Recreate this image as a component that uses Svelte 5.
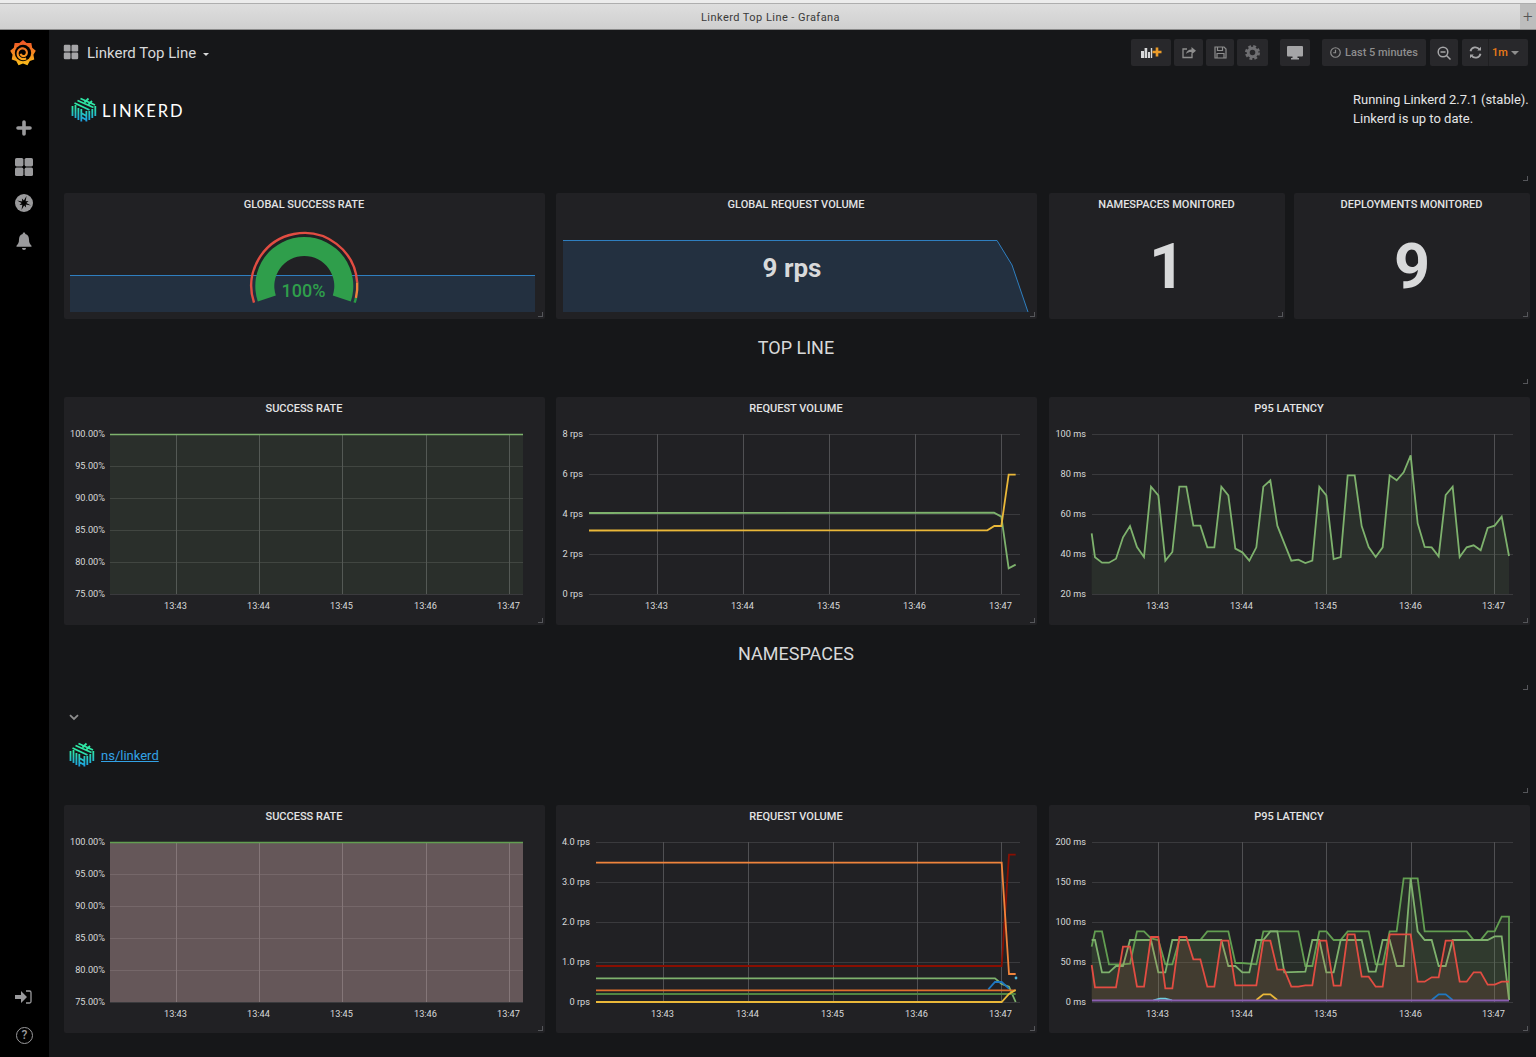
<script>
	const GREEN = '#7eb26d';
	const DARK_GREEN = '#629e51';
	const RED = '#e24d42';
	const TIMES = ['13:43', '13:44', '13:45', '13:46', '13:47'];

	// points were read off 3x crops, so they come with the crop origin
	const crop = (ox, oy, pts) => pts.map(([x, y]) => [ox + x / 3, oy + y / 3]);
	const line = (x0, x1, y, rest = []) => [[x0, y], [x1, y], ...rest];

	const p95Top = crop(1040, 420, [
		[155, 340], [165, 412], [186, 428], [207, 428], [228, 416], [249, 352], [270, 318], [291, 381], [312, 411],
		[333, 200], [355, 226], [376, 422], [397, 396], [418, 200], [439, 200], [460, 317], [481, 317], [502, 382],
		[523, 382], [544, 200], [565, 226], [586, 386], [607, 397], [628, 422], [649, 382], [670, 200], [691, 181],
		[712, 317], [733, 370], [754, 422], [775, 419], [796, 429], [817, 422], [838, 200], [859, 226], [881, 417],
		[902, 411], [923, 166], [944, 166], [965, 318], [986, 381], [1007, 411], [1028, 382], [1049, 166], [1070, 181],
		[1091, 157], [1112, 106], [1133, 310], [1154, 381], [1175, 382], [1196, 409], [1217, 225], [1238, 200],
		[1259, 411], [1280, 382], [1301, 376], [1322, 391], [1343, 324], [1364, 317], [1385, 290], [1407, 408]
	]);

	const p95a = crop(1040, 830, [
		[155, 350], [165, 304], [186, 304], [207, 403], [249, 403], [270, 401], [291, 304], [312, 304], [333, 325],
		[355, 330], [376, 403], [397, 403], [418, 330], [481, 330], [502, 304], [565, 304], [586, 399], [607, 399],
		[649, 403], [670, 304], [775, 304], [796, 408], [817, 408], [838, 304], [859, 304], [881, 330], [902, 330],
		[923, 304], [986, 304], [1007, 403], [1028, 403], [1049, 304], [1070, 304], [1091, 145], [1133, 145],
		[1154, 304], [1280, 304], [1301, 330], [1322, 330], [1343, 304], [1364, 304], [1385, 260], [1407, 260],
		[1407, 510]
	]);
	const p95b = crop(1040, 830, [
		[155, 330], [165, 330], [186, 427], [207, 427], [228, 408], [249, 408], [270, 330], [333, 330], [355, 427],
		[376, 427], [397, 330], [544, 330], [565, 408], [586, 408], [607, 427], [628, 427], [649, 330], [670, 330],
		[691, 304], [712, 304], [733, 427], [796, 425], [817, 330], [838, 330], [859, 427], [881, 427], [902, 330],
		[965, 330], [986, 425], [1007, 425], [1028, 330], [1049, 330], [1070, 408], [1091, 408], [1112, 145],
		[1133, 304], [1154, 330], [1175, 330], [1196, 408], [1217, 408], [1238, 330], [1343, 330], [1364, 319],
		[1385, 319], [1407, 510]
	]);
	const p95c = crop(1040, 830, [
		[155, 405], [165, 472], [228, 472], [249, 350], [270, 350], [291, 470], [312, 470], [333, 321], [355, 321],
		[376, 475], [397, 475], [418, 321], [439, 321], [460, 388], [481, 388], [502, 470], [523, 470], [544, 332],
		[565, 332], [586, 466], [649, 466], [670, 332], [691, 332], [712, 419], [733, 419], [754, 470], [775, 470],
		[796, 466], [817, 466], [838, 332], [859, 332], [881, 467], [902, 467], [923, 313], [944, 313], [965, 440],
		[986, 440], [1007, 470], [1028, 470], [1049, 313], [1112, 313], [1133, 455], [1154, 455], [1175, 442],
		[1196, 442], [1217, 332], [1238, 332], [1259, 455], [1280, 455], [1301, 427], [1322, 427], [1343, 464],
		[1364, 464], [1385, 455], [1407, 455]
	]);

	const ticks = (labels, ys) => labels.map((label, i) => ({ label, y: ys[i] }));
	const rateY = [434, 466, 498, 530, 562, 594];
	const rateLabels = ['100.00%', '95.00%', '90.00%', '85.00%', '80.00%', '75.00%'];

	const topCharts = [
		{
			title: 'SUCCESS RATE', ox: 64, oy: 397, x0: 110, x1: 523, labelX: 105,
			yTicks: ticks(rateLabels, rateY), xTicks: [176, 259, 342, 426, 509],
			series: [{ pts: line(110, 523, 434.5), color: GREEN, fill: 'rgba(126,178,109,.1)', base: 594, width: 1.4 }]
		},
		{
			title: 'REQUEST VOLUME', ox: 556, oy: 397, x0: 589, x1: 1020, labelX: 583,
			yTicks: ticks(['8 rps', '6 rps', '4 rps', '2 rps', '0 rps'], [434, 474, 514, 554, 594]),
			xTicks: [657, 743, 829, 915, 1001],
			series: [
				{ pts: [[589, 513], ...crop(900, 400, [[282, 338], [304, 350], [326, 505], [347, 494]])], color: GREEN },
				{ pts: [[589, 530.5], ...crop(900, 400, [[262, 391], [283, 378], [304, 378], [326, 224], [347, 224]])], color: '#eab839' }
			]
		},
		{
			title: 'P95 LATENCY', ox: 1049, oy: 397, x0: 1092, x1: 1513, labelX: 1086,
			yTicks: ticks(['100 ms', '80 ms', '60 ms', '40 ms', '20 ms'], [434, 474, 514, 554, 594]),
			xTicks: [1158, 1242, 1326, 1411, 1494],
			series: [{ pts: p95Top, color: GREEN, fill: 'rgba(126,178,109,.1)', base: 594 }]
		}
	];

	const bottomCharts = [
		{
			title: 'SUCCESS RATE', ox: 64, oy: 805, x0: 110, x1: 523, labelX: 105,
			yTicks: ticks(rateLabels, rateY.map(y => y + 408)), xTicks: [176, 259, 342, 426, 509],
			series: [{ pts: line(110, 523, 842.5), color: DARK_GREEN, fill: 'rgba(230,190,190,.35)', base: 1002, width: 1.4 }]
		},
		{
			title: 'REQUEST VOLUME', ox: 556, oy: 805, x0: 596, x1: 1020, labelX: 590,
			yTicks: ticks(['4.0 rps', '3.0 rps', '2.0 rps', '1.0 rps', '0 rps'], [842, 882, 922, 962, 1002]),
			xTicks: [663, 748, 833, 917, 1001],
			series: [
				{ pts: [[596, 966], ...crop(900, 830, [[305, 408], [327, 74], [347, 74]])], color: '#890f02' },
				{ pts: [[596, 862.7], ...crop(900, 830, [[305, 98], [327, 432], [347, 432]])], color: '#ef843c' },
				{ pts: [[596, 978.3], ...crop(900, 830, [[285, 445], [305, 462], [327, 470], [347, 516]])], color: GREEN },
				{ pts: crop(900, 830, [[265, 478], [285, 456], [305, 456], [327, 476]]), color: '#1f78c1' },
				{ pts: line(596, 1015.7, 990.3), color: '#e0702c' },
				{ pts: line(596, 1015.7, 994), color: '#508642' },
				{ pts: [[596, 1002], ...crop(900, 830, [[305, 516], [327, 492], [347, 480]])], color: '#eab839' }
			],
			dot: { x: 1016, y: 978, color: '#4fb3d9' }
		},
		{
			title: 'P95 LATENCY', ox: 1049, oy: 805, x0: 1092, x1: 1513, labelX: 1086,
			yTicks: ticks(['200 ms', '150 ms', '100 ms', '50 ms', '0 ms'], [842, 882, 922, 962, 1002]),
			xTicks: [1158, 1242, 1326, 1411, 1494],
			series: [
				{ pts: p95a, color: DARK_GREEN, fill: 'rgba(98,158,81,.1)', base: 1001 },
				{ pts: p95b, color: GREEN, fill: 'rgba(126,178,109,.1)', base: 1001 },
				{ pts: p95c, color: RED, fill: 'rgba(226,77,66,.1)', base: 1001 },
				{ pts: crop(1040, 830, [[340, 511], [360, 506], [376, 506], [396, 511]]), color: '#6ed0e0' },
				{ pts: crop(1040, 830, [[649, 510], [670, 493], [691, 493], [712, 510]]), color: '#eab839' },
				{ pts: crop(1040, 830, [[1175, 510], [1196, 493], [1217, 493], [1238, 510]]), color: '#1f78c1' },
				{ pts: line(1092, 1509, 1000.5), color: '#8a5fb0', width: 2.2 }
			]
		}
	];

	const toPoints = pts => pts.map(p => p.join(',')).join(' ');
	const toArea = (pts, base) =>
		toPoints([[pts[0][0], base], ...pts, [pts[pts.length - 1][0], base]]);

	// gauge: angles are screen-clockwise from east
	const polar = (r, deg) => {
		const a = (deg * Math.PI) / 180;
		return [304.3 + r * Math.cos(a), 286 + r * Math.sin(a)];
	};
	const arc = (r, from, to) => {
		const [x0, y0] = polar(r, from);
		const [x1, y1] = polar(r, to);
		return `M${x0} ${y0}A${r} ${r} 0 ${to - from > 180 ? 1 : 0} 1 ${x1} ${y1}`;
	};
	const sector = (r0, r1, from, to) => {
		const [x1, y1] = polar(r1, from);
		const [x2, y2] = polar(r1, to);
		return `${arc(r0, from, to)}L${x2} ${y2}A${r1} ${r1} 0 1 0 ${x1} ${y1}Z`;
	};

	const round = (count, cx, fn) =>
		Array.from({ length: count }, (_, i) => {
			const [r, deg] = fn(i);
			const a = (deg * Math.PI) / 180;
			return `${cx + r * Math.cos(a)},${cx + r * Math.sin(a)}`;
		}).join(' ');

	// grafana sun, teeth all round, and the swirl inside it
	const sun = round(18, 13, i => [i % 2 ? 10.6 : 13, i * 20 - 90]);
	const swirl = round(34, 13, i => [6.4 - i * 0.12, 60 + i * 14]);
	const star = round(16, 10, i => [i % 4 === 0 ? 7.4 : i % 2 ? 2.4 : 5, i * 22.5 - 70]);

	// x, width, height of the white bars in the add panel button
	const toolbarBars = [[0, 3, 7], [3.6, 2.6, 10], [7, 2, 6], [9.8, 1.4, 10]];
</script>

{#snippet linkerd(size)}
	<svg class="lk" width={size} height={size} viewBox="0 0 26 26" fill="none" stroke="url(#lk-grad)" stroke-width="1.8">
		<path d="M1.500 9V19M4.500 8V21M7.400 11V23M24.300 9V19M21.300 12V21M18.300 14V23" />
		<path d="M6.500 3.500 22.500 10.500M9.500 1.500 24 8M3.500 6 18.500 13M17.500 1.500 13.500 5.500M21 4 17.500 7.500" />
		<path d="M10.300 12V24.500M15.400 14V24.500M10.300 16 15.400 19M10.300 20 15.400 23" />
	</svg>
{/snippet}

{#snippet chart(c)}
	<div class="panel chart">
		<div class="panel-title">{c.title}</div>
		<svg width="481" height="204" viewBox="{c.ox} {c.oy + 24} 481 204">
			{#each c.yTicks as t}
				<line class="grid" x1={c.x0} x2={c.x1} y1={t.y + 0.5} y2={t.y + 0.5} />
				<text class="tick" x={c.labelX} y={t.y + 2.5} text-anchor="end">{t.label}</text>
			{/each}
			{#each c.xTicks as x, i}
				<line class="grid-v" x1={x + 0.5} x2={x + 0.5} y1={c.yTicks[0].y} y2={c.yTicks[c.yTicks.length - 1].y} />
				<text class="tick" x={x - 0.5} y={c.yTicks[c.yTicks.length - 1].y + 14.5} text-anchor="middle">{TIMES[i]}</text>
			{/each}
			{#each c.series as s}
				{#if s.fill}
					<polygon points={toArea(s.pts, s.base)} fill={s.fill} />
				{/if}
				<polyline points={toPoints(s.pts)} fill="none" stroke={s.color} stroke-width={s.width ?? 1.8} />
			{/each}
			{#if c.dot}
				<circle cx={c.dot.x} cy={c.dot.y} r="1.4" fill={c.dot.color} />
			{/if}
		</svg>
	</div>
{/snippet}

<div class="page">
	<svg class="defs" width="0" height="0" aria-hidden="true">
		<defs>
			<linearGradient id="lk-grad" gradientUnits="userSpaceOnUse" x1="0" y1="0" x2="0" y2="26">
				<stop offset="0.35" stop-color="#2ee8a5" />
				<stop offset="1" stop-color="#1a95e8" />
			</linearGradient>
			<linearGradient id="gf-grad" gradientUnits="userSpaceOnUse" x1="0" y1="0" x2="0" y2="26">
				<stop offset="0" stop-color="#ef4e28" />
				<stop offset="1" stop-color="#fbc31a" />
			</linearGradient>
		</defs>
	</svg>

	<div class="titlebar">
		<span>Linkerd Top Line - Grafana</span>
		<div class="newtab">+</div>
	</div>

	<div class="app">
		<aside class="side">
			<svg class="gf" width="26" height="26" viewBox="0 0 26 26">
				<polygon points={sun} fill="url(#gf-grad)" />
				<circle cx="13" cy="13" r="8.200" fill="#000" />
				<polyline points={swirl} fill="none" stroke="url(#gf-grad)" stroke-width="2.100" />
			</svg>
			<svg class="nav-plus" width="16" height="16" viewBox="0 0 16 16"><path d="M8 2v12M2 8h12" stroke="#9a9a9c" stroke-width="3.600" stroke-linecap="round" /></svg>
			<svg class="nav-dash" width="20" height="20" viewBox="0 0 20 20" fill="#9a9a9c">
				<rect x="1" y="1" width="8.400" height="8.400" rx="1.600" /><rect x="10.600" y="1" width="8.400" height="8.400" rx="1.600" />
				<rect x="1" y="10.600" width="8.400" height="8.400" rx="1.600" /><rect x="10.600" y="10.600" width="8.400" height="8.400" rx="1.600" />
			</svg>
			<svg class="nav-compass" width="20" height="20" viewBox="0 0 20 20">
				<circle cx="10" cy="10" r="9" fill="#9a9a9c" />
				<polygon points={star} fill="#000" />
			</svg>
			<svg class="nav-bell" width="16" height="19" viewBox="0 0 16 19" fill="#9a9a9c">
				<path d="M8 .5a1.300 1.300 0 0 1 1.300 1.400C12 2.500 13 4.800 13 7.500c0 3.300 1 4.800 2.500 6.200v1.100H.5v-1.100C2 12.300 3 10.800 3 7.500c0-2.700 1-5 3.700-5.600A1.300 1.300 0 0 1 8 .5Z" />
				<path d="M6 16h4a2 2 0 0 1-4 0Z" />
			</svg>
			<div class="side-spacer"></div>
			<svg class="nav-signin" width="17" height="14" viewBox="0 0 17 14">
				<path d="M0 5h6V1l6 6-6 6V9H0Z" fill="#9a9a9c" />
				<path d="M11 1h3.500a1.500 1.500 0 0 1 1.500 1.500v9a1.500 1.500 0 0 1-1.500 1.500H11" fill="none" stroke="#9a9a9c" stroke-width="1.300" />
			</svg>
			<div class="nav-help">?</div>
		</aside>

		<main class="main">
			<nav class="navbar">
				<svg class="nav-icon" width="16" height="16" viewBox="0 0 20 20" fill="#a5a5a7">
					<rect x="1" y="1" width="8.400" height="8.400" rx="1.600" /><rect x="10.600" y="1" width="8.400" height="8.400" rx="1.600" />
					<rect x="1" y="10.600" width="8.400" height="8.400" rx="1.600" /><rect x="10.600" y="10.600" width="8.400" height="8.400" rx="1.600" />
				</svg>
				<span class="dash-title">Linkerd Top Line</span>
				<span class="caret"></span>
				<div class="toolbar">
					<button class="btn w40" aria-label="Add panel">
						<svg width="21" height="12" viewBox="0 0 21 12">
							{#each toolbarBars as [x, w, h]}
								<rect {x} y={11 - h} width={w} height={h} fill="#d8d9da" />
							{/each}
							<path d="M16 .5v9M11.500 5h9" stroke="#eb9b28" stroke-width="2.600" />
						</svg>
					</button>
					<button class="btn w29 g3" aria-label="Share">
						<svg width="14" height="13" viewBox="0 0 14 13" fill="none">
							<path d="M10 8v3.500H1V3h4" stroke="#8e8e8e" stroke-width="1.300" />
							<path d="M4 8c.5-3 2.500-4.500 5.500-4.500V1L14 4.800 9.500 8.500V6C7 6 5.500 6.500 4 8Z" fill="#8e8e8e" />
						</svg>
					</button>
					<button class="btn w28 g3" aria-label="Save">
						<svg width="13" height="13" viewBox="0 0 13 13" fill="none" stroke="#8e8e8e" stroke-width="1.200">
							<path d="M1 1h9l2 2v9H1Z" /><path d="M3.500 1v3.500h5V1M3 12V7.500h7V12" />
						</svg>
					</button>
					<button class="btn w31 g3" aria-label="Settings">
						<svg width="15" height="15" viewBox="0 0 15 15">
							<circle cx="7.500" cy="7.500" r="5.800" fill="none" stroke="#6f6f72" stroke-width="3.400" stroke-dasharray="2.600 1.950" />
							<circle cx="7.500" cy="7.500" r="4.300" fill="none" stroke="#6f6f72" stroke-width="3" />
						</svg>
					</button>
					<button class="btn w30 g12" aria-label="Cycle view mode">
						<svg width="16" height="14" viewBox="0 0 16 14" fill="#a5a5a7">
							<rect x="0" y="0" width="16" height="10.500" rx="1" /><rect x="5.500" y="10" width="5" height="2.500" /><rect x="4" y="12" width="8" height="1.500" />
						</svg>
					</button>
					<button class="btn w104 g12 time">
						<svg width="11" height="11" viewBox="0 0 12 12" fill="none" stroke="#8e8e8e" stroke-width="1.300">
							<circle cx="6" cy="6" r="5.200" /><path d="M6 3v3.300H3.500" />
						</svg>
						Last 5 minutes
					</button>
					<button class="btn w28 g4" aria-label="Zoom out">
						<svg width="14" height="14" viewBox="0 0 14 14" fill="none" stroke="#a5a5a7" stroke-width="1.500">
							<circle cx="6" cy="6" r="4.800" /><path d="M3.500 6h5M9.500 9.500l4 4" />
						</svg>
					</button>
					<div class="btn refresh g4">
						<span class="refresh-icon">
							<svg width="13" height="13" viewBox="0 0 13 13" fill="none" stroke="#a5a5a7" stroke-width="1.800">
								<path d="M1.500 5.200A5 5 0 0 1 10.500 3.500M11.500 7.800A5 5 0 0 1 2.500 9.500" />
								<path d="M12 .8v3.700H8.300ZM1 12.200V8.500h3.700Z" fill="#a5a5a7" stroke="none" />
							</svg>
						</span>
						<span class="interval">1m</span>
						<span class="caret dim"></span>
					</div>
				</div>
			</nav>

			<section class="text-panel header-panel">
				<div class="brand">
					{@render linkerd(26)}
					<span class="brand-name">LINKERD</span>
				</div>
				<div class="version">Running Linkerd 2.7.1 (stable).<br />Linkerd is up to date.</div>
			</section>

			<section class="row first">
				<div class="panel stat">
					<div class="panel-title">GLOBAL SUCCESS RATE</div>
					<svg width="481" height="102" viewBox="64 217 481 102">
						<rect class="spark-fill" x="70" y="275" width="465" height="37" />
						<line class="spark-line" x1="70" x2="535" y1="275.500" y2="275.500" />
						<path d={arc(53, 161.6, 356)} fill="none" stroke={RED} stroke-width="2.400" />
						<path d={arc(53, 356, 373)} fill="none" stroke="#ef843c" stroke-width="2.400" />
						<path d={arc(53, 373, 378.4)} fill="none" stroke="#299c46" stroke-width="2.400" />
						<path d={sector(49, 30, 161.6, 378.4)} fill="#2f9e4b" />
						<text class="gauge-value" x="303.500" y="297" text-anchor="middle">100%</text>
					</svg>
				</div>
				<div class="panel stat">
					<div class="panel-title">GLOBAL REQUEST VOLUME</div>
					<svg width="481" height="102" viewBox="556 217 481 102">
						<polygon class="spark-fill" points="563,312 563,240 997,240 1012,265 1028,312" />
						<polyline class="spark-line" fill="none" points="563,240.500 997,240.500 1012,265 1028,312" />
						<text class="stat-rps" x="792" y="277" text-anchor="middle">9 rps</text>
					</svg>
				</div>
				<div class="pair">
					<div class="panel stat">
						<div class="panel-title">NAMESPACES MONITORED</div>
						<div class="big-value">1</div>
					</div>
					<div class="panel stat">
						<div class="panel-title">DEPLOYMENTS MONITORED</div>
						<div class="big-value">9</div>
					</div>
				</div>
			</section>

			<section class="text-panel heading">TOP LINE</section>

			<section class="row">
				{#each topCharts as c}
					{@render chart(c)}
				{/each}
			</section>

			<section class="text-panel heading">NAMESPACES</section>

			<section class="text-panel ns">
				<svg class="chevron" width="10" height="7" viewBox="0 0 10 7" fill="none"><path d="M1 1.200 5 5l4-3.800" stroke="#8e8e8e" stroke-width="1.800" /></svg>
				<div class="ns-link">
					{@render linkerd(26)}
					<a href="#ns">ns/linkerd</a>
				</div>
			</section>

			<section class="row">
				{#each bottomCharts as c}
					{@render chart(c)}
				{/each}
			</section>
		</main>
	</div>
</div>

<style>
	:global(body) {
		background: #161719;
		overflow: hidden;
	}

	.page {
		height: 1057px;
		overflow: hidden;
		font-family: Roboto, 'Liberation Sans', sans-serif;
		color: #d8d9da;
		background: #161719;
	}

	.defs {
		position: absolute;
	}

	.titlebar {
		height: 25px;
		border-top: 1px solid #aeaeae;
		border-bottom: 1px solid #8b8b8b;
		margin-top: 3px;
		box-shadow: 0 -3px 0 #ececec;
		background: linear-gradient(#dedede, #cfcfcf);
		display: flex;
		align-items: center;
		justify-content: center;
		font-size: 11px;
		letter-spacing: 0.45px;
		color: #3a3a3a;
		position: relative;
	}

	.titlebar span {
		margin: 2px 0 0 5px;
	}

	.newtab {
		position: absolute;
		top: 0;
		right: 0;
		bottom: 0;
		width: 16px;
		background: #bdbdbd;
		color: #555;
		font-size: 17px;
		font-weight: 300;
		line-height: 25px;
		text-align: center;
	}

	.app {
		display: flex;
		height: 1027px;
	}

	.side {
		width: 49px;
		flex: none;
		background: #000;
		display: flex;
		flex-direction: column;
		align-items: center;
	}

	.gf {
		margin: 10px 3px 0 0;
	}

	.nav-plus,
	.nav-dash,
	.nav-compass,
	.nav-bell,
	.nav-signin {
		margin-right: 2px;
	}

	.nav-plus {
		margin-top: 54px;
	}

	.nav-dash {
		margin-top: 21px;
	}

	.nav-compass {
		margin-top: 16px;
	}

	.nav-bell {
		margin-top: 19px;
	}

	.side-spacer {
		flex: 1;
	}

	.nav-signin {
		margin-bottom: 23px;
	}

	.nav-help {
		width: 15px;
		height: 15px;
		border: 1.500px solid #9a9a9c;
		border-radius: 50%;
		font-size: 12px;
		font-weight: 500;
		line-height: 15px;
		text-align: center;
		color: #9a9a9c;
		margin-bottom: 13px;
	}

	.main {
		width: 1466px;
		margin-left: 15px;
	}

	.navbar {
		height: 47px;
		display: flex;
		align-items: flex-start;
		padding-top: 9px;
		box-sizing: border-box;
		margin-left: -1px;
	}

	.nav-icon {
		margin-top: 5px;
	}

	.dash-title {
		font-size: 15px;
		line-height: 29px;
		margin-left: 8px;
	}

	.caret {
		width: 0;
		height: 0;
		border: 3px solid transparent;
		border-top: 3px solid #d8d9da;
		border-bottom: 0;
		margin: 14px 0 0 7px;
	}

	.caret.dim {
		border-top-color: #8e8e8e;
		margin: 0 0 0 3px;
		border-width: 4px 4px 0;
	}

	.toolbar {
		display: flex;
		margin-left: auto;
		margin-right: 2px;
	}

	.btn {
		height: 27px;
		box-sizing: border-box;
		padding: 0;
		border: 0;
		border-radius: 2px;
		background: #28282b;
		display: flex;
		align-items: center;
		justify-content: center;
		font-family: inherit;
	}

	.w40 { width: 40px; }
	.w31 { width: 31px; }
	.w30 { width: 30px; }
	.w29 { width: 29px; }
	.w28 { width: 28px; }
	.w104 { width: 104px; }
	.g3 { margin-left: 3px; }
	.g4 { margin-left: 4px; }
	.g12 { margin-left: 12px; }

	.time {
		gap: 4px;
		font-size: 11px;
		font-weight: 500;
		color: #8e8e8e;
	}

	.refresh {
		width: 66px;
		justify-content: flex-start;
	}

	.refresh-icon {
		width: 26px;
		height: 27px;
		display: flex;
		align-items: center;
		justify-content: center;
		border-right: 1px solid #1f1f21;
	}

	.interval {
		font-size: 11px;
		font-weight: 500;
		color: #eb7b18;
		margin-left: 3px;
	}

	.text-panel {
		position: relative;
	}

	.text-panel::after,
	.panel::after {
		content: '';
		position: absolute;
		right: 2px;
		bottom: 2px;
		width: 4px;
		height: 4px;
		border-right: 1px solid #55565a;
		border-bottom: 1px solid #55565a;
	}

	.header-panel {
		height: 106px;
		box-sizing: border-box;
		margin-bottom: 10px;
		padding: 20px 1px 0 7px;
		display: flex;
		justify-content: space-between;
	}

	.brand {
		display: flex;
		align-items: flex-start;
		gap: 5px;
	}

	.brand-name {
		font-family: Lato, sans-serif;
		font-size: 16.500px;
		letter-spacing: 1.900px;
		line-height: 29px;
		color: #fff;
	}

	.version {
		font-size: 13px;
		line-height: 18.500px;
		color: #e4e5e6;
		margin-top: -6px;
		width: 176px;
		white-space: nowrap;
	}

	.row {
		display: flex;
		height: 228px;
	}

	.row.first {
		height: 126px;
	}

	.row > :nth-child(2) {
		margin-left: 11px;
	}

	.row > :nth-child(3) {
		margin-left: 12px;
	}

	.panel {
		position: relative;
		width: 481px;
		flex: none;
		background: #212124;
		border-radius: 2px;
	}

	.panel-title {
		height: 24px;
		box-sizing: border-box;
		padding-right: 1px;
		font-size: 11px;
		font-weight: 500;
		line-height: 23.500px;
		text-align: center;
		color: #e3e4e5;
	}

	.panel svg {
		display: block;
	}

	.pair {
		display: flex;
		gap: 9px;
		width: 481px;
	}

	.pair .panel {
		width: 236px;
	}

	.big-value {
		font-size: 63px;
		font-weight: 700;
		line-height: 76px;
		text-align: center;
		margin-top: 12px;
	}

	.spark-fill {
		fill: #233040;
	}

	.spark-line {
		stroke: #2f7fc0;
		stroke-width: 1;
	}

	.gauge-value {
		font-size: 18px;
		font-weight: 500;
		fill: #2f9e4b;
	}

	.stat-rps {
		font-size: 26px;
		font-weight: 700;
		fill: #d8d9da;
	}

	.heading {
		height: 67px;
		box-sizing: border-box;
		padding: 20px 2px 0 0;
		margin-bottom: 11px;
		font-size: 18px;
		line-height: 18px;
		text-align: center;
	}

	.ns {
		height: 92px;
		box-sizing: border-box;
		margin-bottom: 10px;
		padding: 11px 0 0 5px;
	}

	.chevron {
		display: block;
	}

	.ns-link {
		display: flex;
		align-items: center;
		gap: 6px;
		margin-top: 21px;
	}

	.ns-link a {
		font-size: 13px;
		color: #33a2e5;
		text-decoration: underline;
	}

	.grid {
		stroke: #3a3a3d;
		stroke-width: 1;
	}

	.grid-v {
		stroke: #505053;
		stroke-width: 1;
	}

	.tick {
		font-size: 9.200px;
		fill: #d8d9da;
	}
</style>
